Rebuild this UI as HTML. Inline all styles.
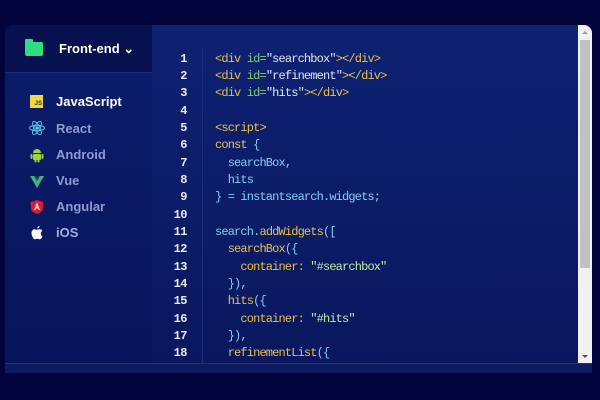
<!DOCTYPE html>
<html><head><style>
*{margin:0;padding:0;box-sizing:border-box}
body{width:600px;height:400px;background:#01033c;position:relative;overflow:hidden;font-family:"Liberation Sans",sans-serif}
.panel{position:absolute;left:5px;top:25px;width:587px;height:348px;border-radius:8px 8px 0 0;overflow:hidden;background:#0a1a64}
.side{position:absolute;left:0;top:0;width:147px;height:348px;background:linear-gradient(#0b1d6c,#08145a)}
.head{position:absolute;left:0;top:0;width:147px;height:48px;background:#07114f;border-bottom:1px solid #1b2b78}
.folder{position:absolute;left:20px;top:17px;width:18px;height:14px;background:#2fdc82;border-radius:2px}
.folder:before{content:"";position:absolute;left:0;top:-3px;width:8px;height:4px;background:#2fdc82;border-radius:1px 1px 0 0}
.ht{position:absolute;left:54px;top:16px;color:#fff;font-weight:bold;font-size:13px}
.item{position:absolute;left:51px;font-size:13px;font-weight:bold;color:#8f9bd0}
.ic{position:absolute;left:24px;width:16px;height:16px}
.code{position:absolute;left:147px;top:0;width:426px;height:338px;background:linear-gradient(#0e2272,#0a175e)}
.gut{position:absolute;left:50px;top:22px;width:1px;height:316px;background:#1c2d7a}
.bot{position:absolute;left:0;top:338px;width:587px;height:10px;background:#0d1a5e;border-top:1px solid #22327c}
.ln{position:absolute;left:0;width:35px;text-align:right;color:#e8ecf8;font-weight:bold;letter-spacing:-0.5px}
.l{position:absolute;left:63px;white-space:pre}
.mono{font-family:"Liberation Mono",monospace;font-size:12px;letter-spacing:-0.85px}
.y{color:#e8c14a}.g{color:#79d46a}.w{color:#dde5f5}.c{color:#7fd0f4}.s{color:#b8eea0}
.sb{position:absolute;left:573px;top:0;width:14px;height:338px;background:#f1f1f1}
.th{position:absolute;left:575px;top:15px;width:10px;height:228px;background:#c1c1c1}
</style></head><body>
<div class="panel">
<div class="side">
<div class="head"><div class="folder"></div><div class="ht">Front-end ⌄</div></div>
<div class="ic" style="top:70px;width:13px;height:13px;left:25px;background:#f0d64a;font-size:6px;color:#333;font-weight:bold;text-align:right;line-height:18px;padding-right:1px">JS</div>
<div class="item" style="top:69px;color:#fff">JavaScript</div>
<svg class="ic" style="top:95px" viewBox="0 0 16 16" fill="none" stroke="#4fc7ef" stroke-width="1"><ellipse cx="8" cy="8" rx="7.5" ry="2.8"/><ellipse cx="8" cy="8" rx="7.5" ry="2.8" transform="rotate(60 8 8)"/><ellipse cx="8" cy="8" rx="7.5" ry="2.8" transform="rotate(120 8 8)"/><circle cx="8" cy="8" r="1.3" fill="#4fc7ef"/></svg>
<div class="item" style="top:96px">React</div>
<svg class="ic" style="top:122px" viewBox="0 0 16 16" fill="#9bd33a"><path d="M4 6a4 4 0 0 1 8 0z"/><rect x="4" y="7" width="8" height="6" rx="1"/><rect x="1.5" y="7" width="2" height="5" rx="1"/><rect x="12.5" y="7" width="2" height="5" rx="1"/><rect x="5.5" y="12" width="2" height="3.5" rx="1"/><rect x="8.5" y="12" width="2" height="3.5" rx="1"/></svg>
<div class="item" style="top:122px">Android</div>
<svg class="ic" style="top:149px" viewBox="0 0 16 16"><path d="M1 2h4l3 5 3-5h4L8 14z" fill="#3fb27f"/><path d="M5 2h2l1 2 1-2h2L8 7z" fill="#35495e"/></svg>
<div class="item" style="top:148px">Vue</div>
<svg class="ic" style="top:174px" viewBox="0 0 16 16"><path d="M8 1l6.5 2.3-1 8.7L8 15l-5.5-3-1-8.7z" fill="#dd1b33"/><path d="M8 3.5L5 11h1.2l.6-1.6h2.4l.6 1.6H11zM7.2 8.4L8 6.3l.8 2.1z" fill="#fff"/></svg>
<div class="item" style="top:174px">Angular</div>
<svg class="ic" style="top:200px" viewBox="0 0 16 16" fill="#fff"><path d="M10.5 1c.1 1.2-.9 2.5-2.2 2.5-.1-1.2 1-2.4 2.2-2.5zM13.5 11.3c-.6 1.4-1.4 3-2.6 3-1 0-1.3-.6-2.5-.6s-1.6.6-2.5.6C4.6 14.3 2.5 11 2.5 8c0-2.4 1.6-3.7 3.1-3.7 1 0 1.8.6 2.4.6.6 0 1.6-.7 2.8-.6.5 0 1.8.2 2.6 1.4-2.3 1.3-1.9 4.6.1 5.6z"/></svg>
<div class="item" style="top:200px;color:#a5b0dd">iOS</div>
</div>
<div class="code mono">
<div class="gut"></div>
<div class="ln" style="top:27px">1</div><div class="l" style="top:27px"><span class="y">&lt;div</span> <span class="g">id=</span><span class="w">"searchbox"</span><span class="y">&gt;&lt;/div&gt;</span></div>
<div class="ln" style="top:44px">2</div><div class="l" style="top:44px"><span class="y">&lt;div</span> <span class="g">id=</span><span class="w">"refinement"</span><span class="y">&gt;&lt;/div&gt;</span></div>
<div class="ln" style="top:61px">3</div><div class="l" style="top:61px"><span class="y">&lt;div</span> <span class="g">id=</span><span class="w">"hits"</span><span class="y">&gt;&lt;/div&gt;</span></div>
<div class="ln" style="top:79px">4</div>
<div class="ln" style="top:96px">5</div><div class="l y" style="top:96px">&lt;script&gt;</div>
<div class="ln" style="top:113px">6</div><div class="l" style="top:113px"><span class="y">const</span> <span class="c">{</span></div>
<div class="ln" style="top:131px">7</div><div class="l c" style="top:131px">  searchBox,</div>
<div class="ln" style="top:148px">8</div><div class="l c" style="top:148px">  hits</div>
<div class="ln" style="top:165px">9</div><div class="l c" style="top:165px">} = instantsearch.widgets;</div>
<div class="ln" style="top:183px">10</div>
<div class="ln" style="top:200px">11</div><div class="l" style="top:200px"><span class="c">search.</span><span class="y">addWidgets</span><span class="c">([</span></div>
<div class="ln" style="top:217px">12</div><div class="l" style="top:217px">  <span class="y">searchBox</span><span class="c">({</span></div>
<div class="ln" style="top:235px">13</div><div class="l" style="top:235px">    <span class="y">container:</span> <span class="s">"#searchbox"</span></div>
<div class="ln" style="top:252px">14</div><div class="l c" style="top:252px">  }),</div>
<div class="ln" style="top:269px">15</div><div class="l" style="top:269px">  <span class="y">hits</span><span class="c">({</span></div>
<div class="ln" style="top:287px">16</div><div class="l" style="top:287px">    <span class="y">container:</span> <span class="s">"#hits"</span></div>
<div class="ln" style="top:304px">17</div><div class="l c" style="top:304px">  }),</div>
<div class="ln" style="top:321px">18</div><div class="l" style="top:321px">  <span class="y">refinementList</span><span class="c">({</span></div>
</div>
<div class="bot"></div>
<div class="sb"></div><div class="th"></div>
<div style="position:absolute;left:577px;top:6px;border:3px solid transparent;border-bottom-color:#a0a0a0;border-top:0"></div>
<div style="position:absolute;left:577px;top:330px;border:3px solid transparent;border-top-color:#505050;border-bottom:0"></div>
</div>
</body></html>
